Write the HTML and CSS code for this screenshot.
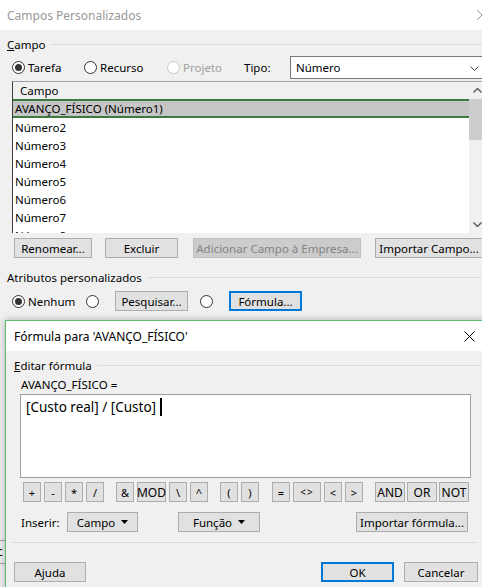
FILE: index.html
```html
<!DOCTYPE html>
<html>
<head>
<meta charset="utf-8">
<link rel="stylesheet" href="styles.css">
</head>
<body>
<div class="screen">
  <div class="win">
    <div class="titlebar">
      <span class="title-out">Campos Personalizados</span>
      <svg class="close-out" width="10" height="10" viewBox="0 0 10 10"><path d="M0 0L10 10M10 0L0 10" stroke="#999" stroke-width="1"/></svg>
    </div>
    <div class="group g1"><span class="glabel"><u>C</u>ampo</span><span class="gline"></span></div>
    <div class="typerow">
      <span class="radio r-tarefa"><span class="rb on"></span>Tarefa</span>
      <span class="radio r-recurso"><span class="rb"></span>Recurso</span>
      <span class="radio r-projeto disabled"><span class="rb"></span>Projeto</span>
      <span class="tipo">Tipo:</span>
      <span class="select">Número<svg class="chev" width="9" height="5" viewBox="0 0 9 5"><path d="M0.5 0.5L4.5 4.5L8.5 0.5" fill="none" stroke="#444" stroke-width="1"/></svg></span>
    </div>
    <div class="list">
      <div class="rows">
        <div class="lhead">Campo</div>
        <div class="lrow sel">AVANÇO_FÍSICO (Número1)</div>
        <div class="lrow">Número2</div>
        <div class="lrow">Número3</div>
        <div class="lrow">Número4</div>
        <div class="lrow">Número5</div>
        <div class="lrow">Número6</div>
        <div class="lrow">Número7</div>
        <div class="lrow">Número8</div>
      </div>
      <div class="sbar">
        <svg class="sarrow" width="9" height="5" viewBox="0 0 9 5"><path d="M0.5 4.5L4.5 0.5L8.5 4.5" fill="none" stroke="#606060" stroke-width="1.5"/></svg>
        <div class="thumb"></div>
        <div class="strack"></div>
        <svg class="sarrow" width="9" height="5" viewBox="0 0 9 5"><path d="M0.5 0.5L4.5 4.5L8.5 0.5" fill="none" stroke="#606060" stroke-width="1.5"/></svg>
      </div>
    </div>
    <div class="btnrow">
      <span class="btn b-ren">Renomear...</span>
      <span class="btn b-exc">Excluir</span>
      <span class="btn b-add dis">Adicionar Campo à Empresa...</span>
      <span class="btn b-imp">Importar Campo...</span>
    </div>
    <div class="group g2"><span class="glabel">Atributos personalizados</span><span class="gline"></span></div>
    <div class="attrrow">
      <span class="radio r-nenhum"><span class="rb on"></span>Nenhum</span>
      <span class="rb r2"></span>
      <span class="btn b-pes">Pesquisar...</span>
      <span class="rb r3"></span>
      <span class="btn b-for focus">Fórmula...</span>
    </div>
  </div>

  <div class="behind">
    <div class="bline"></div>
    <div class="btext">c</div>
    <div class="bline"></div>
    <div class="btext">l</div>
  </div>

  <div class="fdlg">
    <div class="ftitle">
      <span>Fórmula para 'AVANÇO_FÍSICO'</span>
      <svg class="close-in" width="11" height="11" viewBox="0 0 11 11"><path d="M0.5 0.5L10.5 10.5M10.5 0.5L0.5 10.5" stroke="#000" stroke-width="1"/></svg>
    </div>
    <div class="fbody">
      <div class="group g3"><span class="glabel"><u>E</u>ditar fórmula</span><span class="gline"></span></div>
      <div class="fname">AVANÇO_FÍSICO =</div>
      <div class="editor">[Custo real] / [Custo]<span class="caret"></span></div>
      <div class="ops">
        <span class="op">+</span>
        <span class="op">-</span>
        <span class="op">*</span>
        <span class="op">/</span>
        <span class="op sep">&amp;</span>
        <span class="op mod">MOD</span>
        <span class="op">\</span>
        <span class="op">^</span>
        <span class="op sep">(</span>
        <span class="op">)</span>
        <span class="op sep13">=</span>
        <span class="op ne">&lt;&gt;</span>
        <span class="op">&lt;</span>
        <span class="op">&gt;</span>
        <span class="op sep lg">AND</span>
        <span class="op lg tight">OR</span>
        <span class="op lg tight">NOT</span>
      </div>
      <div class="insrow">
        <span class="inslabel">Inserir:</span>
        <span class="btn b-campo">Campo<svg class="tri" width="7" height="4" viewBox="0 0 7 4"><path d="M0 0H7L3.5 4Z" fill="#000"/></svg></span>
        <span class="btn b-func">Função<svg class="tri" width="7" height="4" viewBox="0 0 7 4"><path d="M0 0H7L3.5 4Z" fill="#000"/></svg></span>
        <span class="btn b-impf">Importar fórmula...</span>
      </div>
      <div class="fsep"></div>
      <div class="footrow">
        <span class="btn b-aj">Ajuda</span>
        <span class="btn b-ok focus">OK</span>
        <span class="btn b-can">Cancelar</span>
      </div>
    </div>
  </div>
</div>
</body>
</html>
```

FILE: styles.css
```css
* { box-sizing: border-box; }
html, body { margin: 0; padding: 0; }
body {
  font-family: "Noto Sans", "Open Sans", sans-serif;
  font-size: 11.5px;
  color: #000;
  background: #f0f0f0;
}
.screen {
  position: relative;
  width: 482px;
  height: 587px;
  overflow: hidden;
  background: #f0f0f0;
}
.win { width: 482px; }
.titlebar {
  height: 30px;
  background: #fff;
  display: flex;
  align-items: center;
  padding-left: 7px;
  position: relative;
}
.title-out { color: #999; font-size: 12px; }
.close-out { position: absolute; left: 477px; top: 10px; }

.group {
  display: flex;
  align-items: center;
  height: 16px;
  padding-left: 7px;
}
.glabel { white-space: nowrap; }
.gline { flex: 1; height: 1px; background: #dcdcdc; margin-left: 5px; margin-right: 4px; }
.g1 { margin-top: 6px; }
.g1 .gline { margin-right: 0; }
.g2 { margin-top: 11px; }
.g2 .gline { margin-right: 0; }

.radio { display: inline-flex; align-items: center; white-space: nowrap; flex: none; }
.rb {
  display: inline-block;
  width: 13px; height: 13px;
  border: 1px solid #333;
  border-radius: 50%;
  background: #fff;
  position: relative;
  margin-right: 3px;
  flex: none;
}
.rb.on::after {
  content: "";
  position: absolute;
  left: 2px; top: 2px;
  width: 7px; height: 7px;
  border-radius: 50%;
  background: #333;
}
.disabled { color: #a0a0a0; }
.disabled .rb { border-color: #c8c8c8; }

.typerow {
  display: flex;
  align-items: center;
  height: 23px;
  margin-top: 4px;
  padding-left: 12px;
}
.r-tarefa { width: 72px; }
.r-recurso { width: 83px; }
.r-projeto { width: 77px; }
.tipo { width: 46px; flex: none; }
.select {
  width: 194px;
  height: 23px;
  background: #fff;
  border: 1px solid #7a7a7a;
  display: flex;
  align-items: center;
  padding-left: 5px;
  position: relative;
  flex: none;
}
.chev { position: absolute; left: 179px; top: 9px; }

.list {
  margin-top: 2px;
  margin-left: 12px;
  width: 474px;
  height: 152px;
  border-top: 1px solid #a0a0a0;
  border-left: 1px solid #3c3c3c;
  background: #fff;
  display: flex;
  overflow: hidden;
}
.rows { flex: 1; overflow: hidden; }
.lhead {
  height: 17px;
  background: #f0f0f0;
  padding-left: 7px;
  display: flex;
  align-items: center;
}
.lrow {
  height: 18px;
  padding-left: 2px;
  display: flex;
  align-items: center;
  white-space: nowrap;
}
.lrow.sel {
  height: 19px;
  background: #c6c6c6;
  border-top: 2px solid #3e7a3e;
  border-bottom: 2px solid #3e7a3e;
}
.sbar {
  width: 17px;
  background: #f0f0f0;
  display: flex;
  flex-direction: column;
  align-items: center;
}
.sarrow { flex: none; margin: 6px 0; }
.thumb { width: 15px; height: 41px; background: #cdcdcd; align-self: flex-start; }
.strack { flex: 1; }

.btn {
  display: inline-flex;
  align-items: center;
  justify-content: center;
  height: 20px;
  background: #e1e1e1;
  border: 1px solid #adadad;
  white-space: nowrap;
  flex: none;
}
.btn.dis { background: #cccccc; border-color: #bfbfbf; color: #838383; }
.btn.focus { border: 2px solid #0078d7; }

.btnrow {
  display: flex;
  margin-top: 5px;
  padding-left: 14px;
}
.b-ren { width: 78px; }
.b-exc { width: 73px; margin-left: 13px; }
.b-add { width: 168px; margin-left: 15px; }
.b-imp { width: 108px; margin-left: 14px; }

.attrrow {
  display: flex;
  align-items: center;
  height: 20px;
  margin-top: 6px;
  padding-left: 12px;
}
.r-nenhum { width: 74px; }
.b-pes { width: 73px; margin-left: 13px; }
.r3 { margin-left: 12px; }
.b-for { width: 73px; margin-left: 13px; }

.behind {
  position: absolute;
  left: 0; top: 540px;
  width: 5px;
  overflow: hidden;
}
.bline { height: 1px; background: #a0a0a0; }
.btext { height: 22px; line-height: 22px; margin-left: -3px; font-size: 12px; }

.fdlg {
  position: absolute;
  left: 5px;
  top: 320px;
  width: 490px;
  height: 290px;
  border: 1px solid #5cbb6e;
  background: #f0f0f0;
  box-shadow: 0 0 7px rgba(0, 0, 0, 0.28);
}
.ftitle {
  height: 30px;
  background: #fff;
  display: flex;
  align-items: center;
  padding-left: 8px;
  position: relative;
  font-size: 12px;
}
.close-in { position: absolute; left: 458px; top: 10px; }
.g3 { margin-top: 6px; padding-left: 8px; }
.g3 .gline { flex: none; width: 386px; }
.fname { height: 16px; line-height: 16px; margin-top: 4px; padding-left: 15px; }
.editor {
  margin-top: 1px;
  margin-left: 14px;
  width: 451px;
  height: 84px;
  background: #fff;
  border: 1px solid #a0a0a0;
  padding: 3px 5px;
  font-size: 13.5px;
  line-height: 18px;
}
.caret {
  display: inline-block;
  width: 2px;
  height: 18px;
  background: #000;
  margin-left: 4px;
  vertical-align: top;
}
.ops {
  display: flex;
  margin-top: 4px;
  padding-left: 17px;
}
.op {
  display: inline-flex;
  align-items: center;
  justify-content: center;
  width: 18px;
  height: 20px;
  background: #e1e1e1;
  border: 1px solid #adadad;
  margin-left: 3px;
  flex: none;
  font-size: 11px;
}
.op:first-child { margin-left: 0; }
.op.sep { margin-left: 12px; }
.op.sep13 { margin-left: 13px; }
.op.mod { width: 29px; font-size: 12px; }
.op.ne { width: 28px; font-size: 10px; letter-spacing: 1px; }
.op.lg { width: 30px; font-size: 12px; }
.op.tight { margin-left: 2px; }

.insrow {
  display: flex;
  align-items: center;
  margin-top: 10px;
  padding-left: 15px;
  height: 20px;
}
.inslabel { width: 46px; }
.b-campo { width: 71px; }
.b-func { width: 82px; margin-left: 40px; }
.b-impf { width: 112px; margin-left: 96px; }
.tri { margin-left: 6px; }

.fsep {
  margin-top: 10px;
  margin-left: 6px;
  width: 466px;
  height: 1px;
  background: #dcdcdc;
}
.footrow {
  display: flex;
  margin-top: 19px;
  padding-left: 8px;
}
.b-aj { width: 72px; }
.b-ok { width: 73px; margin-left: 235px; }
.b-can { width: 74px; margin-left: 10px; }
```
